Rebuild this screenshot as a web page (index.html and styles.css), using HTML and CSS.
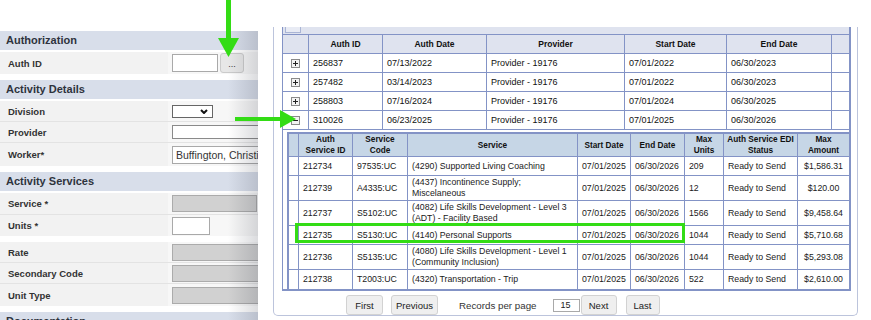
FILE: index.html
```html
<!DOCTYPE html>
<html>
<head>
<meta charset="utf-8">
<link rel="stylesheet" href="styles.css">
</head>
<body>
<div class="page">
  <aside class="form">
    <div class="band">Authorization</div>
    <div class="group">
      <div class="row h22"><span class="lbl">Auth ID</span><div class="val"><input class="field f-auth" value=""><button class="dots">...</button></div></div>
    </div>
    <div class="band">Activity Details</div>
    <div class="group">
      <div class="row"><span class="lbl">Division</span><div class="val"><div class="sel"><svg width="8" height="5" viewBox="0 0 8 5"><polyline points="1,1 4,4 7,1" fill="none" stroke="#111" stroke-width="2"/></svg></div></div></div>
      <div class="row"><span class="lbl">Provider</span><div class="val"><input class="field f-prov" value=""></div></div>
      <div class="row h23"><span class="lbl">Worker*</span><div class="val"><input class="field f-work" value="Buffington, Christina"></div></div>
    </div>
    <div class="band">Activity Services</div>
    <div class="group">
      <div class="row h21"><span class="lbl">Service *</span><div class="val"><div class="field gray f-svc"></div></div></div>
      <div class="row h21"><span class="lbl">Units *</span><div class="val"><input class="field f-units" value=""></div></div>
    </div>
    <div class="group">
      <div class="row"><span class="lbl">Rate</span><div class="val"><div class="field gray f-long"></div></div></div>
      <div class="row"><span class="lbl">Secondary Code</span><div class="val"><div class="field gray f-long"></div></div></div>
      <div class="row h22"><span class="lbl">Unit Type</span><div class="val"><div class="field gray f-long"></div></div></div>
    </div>
    <div class="band">Documentation</div>
  </aside>

  <section class="modal">
    <div class="frame">
      <div class="grid">
        <div class="gridtop"><span class="tab"></span></div>
        <table class="auth">
          <thead>
            <tr>
              <th class="c-exp"></th>
              <th class="c-id">Auth ID</th>
              <th class="c-date">Auth Date</th>
              <th class="c-prov">Provider</th>
              <th class="c-start">Start Date</th>
              <th class="c-end">End Date</th>
              <th class="c-pad"></th>
            </tr>
          </thead>
          <tbody>
            <tr class="r"><td class="tg"><svg width="9" height="9" viewBox="0 0 9 9"><rect x=".5" y=".5" width="8" height="8" fill="#f3f3f3" stroke="#8a8a8a"/><path d="M2 4.5h5M4.5 2v5" stroke="#222"/></svg></td><td>256837</td><td>07/13/2022</td><td>Provider - 19176</td><td>07/01/2022</td><td>06/30/2023</td><td></td></tr>
            <tr class="r"><td class="tg"><svg width="9" height="9" viewBox="0 0 9 9"><rect x=".5" y=".5" width="8" height="8" fill="#f3f3f3" stroke="#8a8a8a"/><path d="M2 4.5h5M4.5 2v5" stroke="#222"/></svg></td><td>257482</td><td>03/14/2023</td><td>Provider - 19176</td><td>07/01/2022</td><td>06/30/2023</td><td></td></tr>
            <tr class="r"><td class="tg"><svg width="9" height="9" viewBox="0 0 9 9"><rect x=".5" y=".5" width="8" height="8" fill="#f3f3f3" stroke="#8a8a8a"/><path d="M2 4.5h5M4.5 2v5" stroke="#222"/></svg></td><td>258803</td><td>07/16/2024</td><td>Provider - 19176</td><td>07/01/2024</td><td>06/30/2025</td><td></td></tr>
            <tr class="r"><td class="tg"><svg width="9" height="9" viewBox="0 0 9 9"><rect x=".5" y=".5" width="8" height="8" fill="#f3f3f3" stroke="#8a8a8a"/><path d="M2 4.5h5" stroke="#222"/></svg></td><td>310026</td><td>06/23/2025</td><td>Provider - 19176</td><td>07/01/2025</td><td>06/30/2026</td><td></td></tr>
            <tr class="exp">
              <td colspan="7" class="expcell">
                <table class="svc">
                  <thead>
                    <tr>
                      <th class="s0"></th>
                      <th class="s1">Auth<br>Service ID</th>
                      <th class="s2">Service<br>Code</th>
                      <th class="s3">Service</th>
                      <th class="s4">Start Date</th>
                      <th class="s5">End Date</th>
                      <th class="s6">Max<br>Units</th>
                      <th class="s7">Auth Service EDI<br>Status</th>
                      <th class="s8">Max<br>Amount</th>
                    </tr>
                  </thead>
                  <tbody>
                    <tr class="one"><td></td><td>212734</td><td>97535:UC</td><td>(4290) Supported Living Coaching</td><td>07/01/2025</td><td>06/30/2026</td><td>209</td><td>Ready to Send</td><td class="amt">$1,586.31</td></tr>
                    <tr><td></td><td>212739</td><td>A4335:UC</td><td>(4437) Incontinence Supply;<br>Miscelaneous</td><td>07/01/2025</td><td>06/30/2026</td><td>12</td><td>Ready to Send</td><td class="amt">$120.00</td></tr>
                    <tr><td></td><td>212737</td><td>S5102:UC</td><td>(4082) Life Skills Development - Level 3<br>(ADT) - Facility Based</td><td>07/01/2025</td><td>06/30/2026</td><td>1566</td><td>Ready to Send</td><td class="amt">$9,458.64</td></tr>
                    <tr class="one"><td></td><td>212735</td><td>S5130:UC</td><td>(4140) Personal Supports</td><td>07/01/2025</td><td>06/30/2026</td><td>1044</td><td>Ready to Send</td><td class="amt">$5,710.68</td></tr>
                    <tr><td></td><td>212736</td><td>S5135:UC</td><td>(4080) Life Skills Development - Level 1<br>(Community Inclusion)</td><td>07/01/2025</td><td>06/30/2026</td><td>1044</td><td>Ready to Send</td><td class="amt">$5,293.08</td></tr>
                    <tr class="one"><td></td><td>212738</td><td>T2003:UC</td><td>(4320) Transportation - Trip</td><td>07/01/2025</td><td>06/30/2026</td><td>522</td><td>Ready to Send</td><td class="amt">$2,610.00</td></tr>
                  </tbody>
                </table>
              </td>
            </tr>
          </tbody>
        </table>
      </div>
      <div class="pager">
        <button class="btn b-first">First</button>
        <button class="btn b-prev">Previous</button>
        <span class="rpp">Records per page</span>
        <input class="pgsize" value="15">
        <button class="btn b-next">Next</button>
        <button class="btn b-last">Last</button>
      </div>
    </div>
  </section>
</div>

<svg class="annot" width="871" height="320" viewBox="0 0 871 320">
  <g fill="#33dc15">
    <rect x="226" y="0" width="5" height="39"/>
    <polygon points="218,38 239,38 228.5,57"/>
    <rect x="235" y="117" width="46" height="4"/>
    <polygon points="280,110 280,128 296,119"/>
  </g>
  <rect x="296.5" y="224.5" width="387" height="17" fill="none" stroke="#33dc15" stroke-width="3"/>
</svg>
</body>
</html>
```

FILE: styles.css
```css
* { box-sizing: border-box; }
html, body { margin: 0; padding: 0; background: #fff; }
body {
  width: 871px; height: 320px; overflow: hidden; position: relative;
  font-family: "Liberation Sans", Arial, sans-serif; color: #222;
}
.page { display: flex; align-items: flex-start; }

/* ---------- left form ---------- */
.form { width: 258px; flex: none; margin-top: 31px; position: relative; overflow: hidden; }
.form::after {
  content: ""; position: absolute; top: 0; right: 0; bottom: 0; width: 30px;
  background: linear-gradient(to right, rgba(40,45,60,0), rgba(40,45,60,.17));
  pointer-events: none;
}
.band {
  height: 19px; line-height: 19px; padding-left: 6px;
  background: #d8deea; color: #2e333d;
  font-weight: bold; font-size: 11px; white-space: nowrap;
}
.group { margin: 2px 0 6px; background: #f2f2f2; }
.row { display: flex; align-items: center; height: 20px; box-sizing: content-box; }
.row + .row { border-top: 1px solid #e3e3e3; }
.row.h21 { height: 21px; }
.row.h22 { height: 22px; }
.row.h23 { height: 23px; }
.lbl { width: 168px; flex: none; padding-left: 8px; font-weight: bold; font-size: 9.5px; color: #333; white-space: nowrap; }
.val {
  flex: 1; align-self: stretch; display: flex; align-items: center; gap: 2px;
  padding-left: 4px; background: #f7f7f7; white-space: nowrap;
}
.field {
  display: block; flex: none; height: 18px; margin: 0; padding: 0 3px;
  border: 1px solid #a9a9a9; border-radius: 0; background: #fff;
  font: 10.5px "Liberation Sans", Arial, sans-serif; color: #333; outline: none;
}
.field.gray { background: #d1d1d1; border-color: #ababab; height: 17px; }
.f-auth { width: 46px; }
.f-prov { width: 130px; height: 14px; border-color: #8a8a8a; }
.f-work { width: 130px; }
.f-svc { width: 85px; }
.f-units { width: 38px; }
.f-long { width: 130px; height: 18px; }
.dots {
  width: 24px; height: 20px; margin: 0; padding: 2px 0 0; flex: none;
  border: 1px solid #cbcbcb; border-radius: 3px; background: #e7e7e7;
  font: 9px "Liberation Sans", Arial, sans-serif; color: #333;
}
.sel {
  width: 41px; height: 13px; border: 1px solid #666; background: #fff;
  display: flex; align-items: center; justify-content: flex-end; padding-right: 4px;
}
.sel svg { display: block; }

/* ---------- right modal ---------- */
.modal { flex: 1; padding: 27px 0 0 15px; }
.frame {
  width: 585px; height: 289px; padding-left: 8px;
  border: 1px solid #bcc4dc; border-top: 0; border-radius: 0 0 5px 5px;
}
.grid {
  width: 569px;
  border-left: 1px solid #8393c6; border-right: 2px solid #8393c6; border-bottom: 2px solid #8393c6;
}
.gridtop { height: 7px; background: #dfe3ef; }
.tab {
  display: block; width: 16px; height: 6px; margin-left: 2px;
  border: 1px solid #aab5d5; border-top: 0; background: #e8ebf4;
}

.auth { width: 566px; border-collapse: separate; border-spacing: 0; table-layout: fixed; font-size: 9px; color: #111; }
.auth > thead > tr > th, .auth > tbody > tr > td {
  border-right: 1px solid #8393c6; border-bottom: 1px solid #8393c6;
  padding: 0 4px; text-align: left; white-space: nowrap; overflow: hidden;
}
.auth > thead > tr > th:last-child, .auth > tbody > tr > td:last-child { border-right: 0; }
.auth > thead > tr { height: 20px; }
.auth > thead > tr > th {
  border-top: 1px solid #8393c6; background: #dfe3ef;
  font-weight: bold; font-size: 8.5px; text-align: center; color: #111;
}
.c-exp { width: 26px; }
.c-id { width: 74px; }
.c-date { width: 104px; }
.c-prov { width: 138px; }
.c-start { width: 102px; }
.c-end { width: 105px; }
.c-pad { width: 17px; }
.auth tr.r { height: 19px; }
.auth td.tg { padding: 0 0 0 8px; }
.tg svg { display: block; }
.auth > tbody > tr.exp > td.expcell { padding: 2px 0 0 4px; border-bottom: 0; border-right: 0; }

.svc {
  width: 562px; border-collapse: separate; border-spacing: 0; table-layout: fixed;
  border-top: 2px solid #8393c6; border-left: 2px solid #8393c6;
  font-size: 8.75px; color: #1a1a1a;
}
.svc th, .svc td {
  border-right: 1px solid #8393c6; border-bottom: 1px solid #8393c6;
  padding: 1px 4px; line-height: 11px; text-align: left; white-space: nowrap; overflow: hidden;
}
.svc th {
  background: #c6d6e6; font-weight: bold; font-size: 8.25px; text-align: center;
  padding: 0 1px; color: #111;
}
.svc th:last-child, .svc td:last-child { border-right: 0; }
.svc tbody tr:last-child td { border-bottom: 0; }
.svc tr.one { height: 19px; }
.svc .amt { text-align: center; }
.s0 { width: 10px; }
.s1 { width: 54px; }
.s2 { width: 55px; }
.s3 { width: 170px; }
.s4 { width: 53px; }
.s5 { width: 54px; }
.s6 { width: 39px; }
.s7 { width: 74px; }
.s8 { width: 51px; }

/* ---------- pager ---------- */
.pager { display: flex; align-items: center; height: 20px; margin-top: 4px; padding-left: 64px; }
.btn {
  height: 20px; margin: 0; padding: 0; flex: none;
  border: 1px solid #d2d2d2; border-radius: 3px; background: #efefef;
  font: 9.5px "Liberation Sans", Arial, sans-serif; color: #222;
}
.b-first { width: 37px; }
.b-prev { width: 47px; margin-left: 8px; }
.b-next { width: 36px; margin-left: 1px; }
.b-last { width: 34px; margin-left: 9px; }
.rpp { margin-left: 21px; font-size: 9.75px; color: #333; white-space: nowrap; }
.pgsize {
  width: 27px; height: 13px; margin: 0 0 0 16px; padding: 0 0 0 7px;
  border: 1px solid #a9a9a9; border-radius: 0; background: #fff;
  font: 9px "Liberation Sans", Arial, sans-serif; color: #222;
}

/* ---------- annotations ---------- */
.annot { position: absolute; left: 0; top: 0; pointer-events: none; }
```
